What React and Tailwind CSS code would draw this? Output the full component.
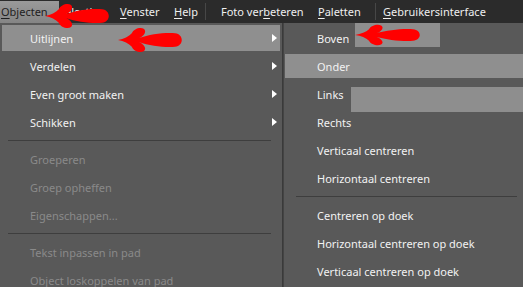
import React from "react";

const Arrow = ({ className }) => (
  <svg viewBox="0 0 66 27" preserveAspectRatio="none" className={className}>
    <path
      d="M0 13.5 C6 12.5 11 10 14 6.5 C16 1.5 23 -0.5 26.5 2 C29 4.5 27 9 21.5 11.5 C32 7.5 48 5.5 58 6.5 C67 7.5 67 19.5 58 20.5 C48 21.5 32 19.5 21.5 15.5 C27 18 29 22.5 26.5 25 C23 27.5 16 25.5 14 20.5 C11 17 6 14.5 0 13.5 Z"
      fill="#ff0000"
    />
  </svg>
);

const MenuTitle = ({ first, rest, w, active }) => (
  <div className={`h-full flex items-center shrink-0 ${w}`}>
    <span
      className={`h-[22px] flex items-center ${
        active ? "bg-gradient-to-b from-[#9a9a9a] to-[#858585] text-[#1e1e1e] pl-[1px] pr-[11px]" : "text-[#efefef]"
      }`}
    >
      <span className="underline underline-offset-2">{first}</span>
      {rest}
    </span>
  </div>
);

const Row = ({ label, sub, disabled, active }) => (
  <div className="h-[28px] px-[2px] py-[1px]">
    <div
      className={`h-full flex items-center pl-[28px] pr-[3px] ${active ? "bg-[#8f8f8f]" : ""} ${
        disabled ? "text-[#8a8a8a]" : "text-[#f2f2f2]"
      }`}
    >
      <span className="flex-1">{label}</span>
      {sub && (
        <svg width="5" height="8" viewBox="0 0 5 8">
          <path d="M0 0 L5 4 L0 8 Z" fill="#ffffff" />
        </svg>
      )}
    </div>
  </div>
);

const SubRow = ({ label, active }) => (
  <div className="h-[28px] py-[2px] pl-[1px]">
    <div className={`h-full flex items-center pl-[32px] text-[#f2f2f2] ${active ? "bg-[#8f8f8f]" : ""}`}>
      {label}
    </div>
  </div>
);

const Sep = ({ className }) => (
  <div className={`h-[9px] flex items-center ${className}`}>
    <div className="h-px w-full bg-[#3e3e3e]" />
  </div>
);

export default function App() {
  return (
    <div
      className="relative w-[523px] h-[287px] overflow-hidden bg-[#595959] text-[11px] leading-none"
      style={{ fontFamily: '"Noto Sans", "Open Sans", sans-serif' }}
    >
      <div className="h-[23px] bg-[#2b2b2b] flex items-center">
        <MenuTitle first="O" rest="bjecten" w="w-[59px]" active />
        <MenuTitle first="S" rest="electie" w="w-[61px]" />
        <MenuTitle first="V" rest="enster" w="w-[54px]" />
        <MenuTitle first="H" rest="elp" w="w-[31px]" />
        <div className="w-px h-[17px] bg-[#474747] mr-[15px]" />
        <div className="w-[97px] text-[#efefef]">
          Foto ver<span className="underline underline-offset-2">b</span>eteren
        </div>
        <MenuTitle first="P" rest="aletten" w="w-[57px]" />
        <div className="w-px h-[17px] bg-[#474747] mr-[7px]" />
        <MenuTitle first="G" rest="ebruikersinterface" w="w-[130px]" />
      </div>

      <div className="flex h-[264px]">
        <div className="w-[283px] pt-[1px] border-r border-[#3a3a3a]">
          <Row label="Uitlijnen" sub active />
          <Row label="Verdelen" sub />
          <Row label="Even groot maken" sub />
          <Row label="Schikken" sub />
          <Sep className="pl-[8px] pr-[11px]" />
          <Row label="Groeperen" disabled />
          <Row label="Groep opheffen" disabled />
          <Row label="Eigenschappen..." disabled />
          <Sep className="pl-[8px] pr-[11px]" />
          <Row label="Tekst inpassen in pad" disabled />
          <Row label="Object loskoppelen van pad" disabled />
        </div>
        <div className="flex-1 pt-[1px] border-l border-[#444444]">
          <SubRow label="Boven" />
          <SubRow label="Onder" active />
          <SubRow label="Links" />
          <SubRow label="Rechts" />
          <SubRow label="Verticaal centreren" />
          <SubRow label="Horizontaal centreren" />
          <Sep className="pl-[12px] pr-[6px]" />
          <SubRow label="Centreren op doek" />
          <SubRow label="Horizontaal centreren op doek" />
          <SubRow label="Verticaal centreren op doek" />
        </div>
      </div>

      {/* overlays from the annotated screenshot */}
      <div className="absolute left-[355px] top-[23px] w-[85px] h-[24px] bg-[#8e8e8e]" />
      <div className="absolute left-[351px] top-[87px] w-[172px] h-[25px] bg-[#8e8e8e]" />
      <Arrow className="absolute left-[45px] top-[3px] w-[65px] h-[26px]" />
      <Arrow className="absolute left-[118px] top-[27px] w-[65px] h-[26px]" />
      <Arrow className="absolute left-[355px] top-[24px] w-[66px] h-[22px]" />
    </div>
  );
}
